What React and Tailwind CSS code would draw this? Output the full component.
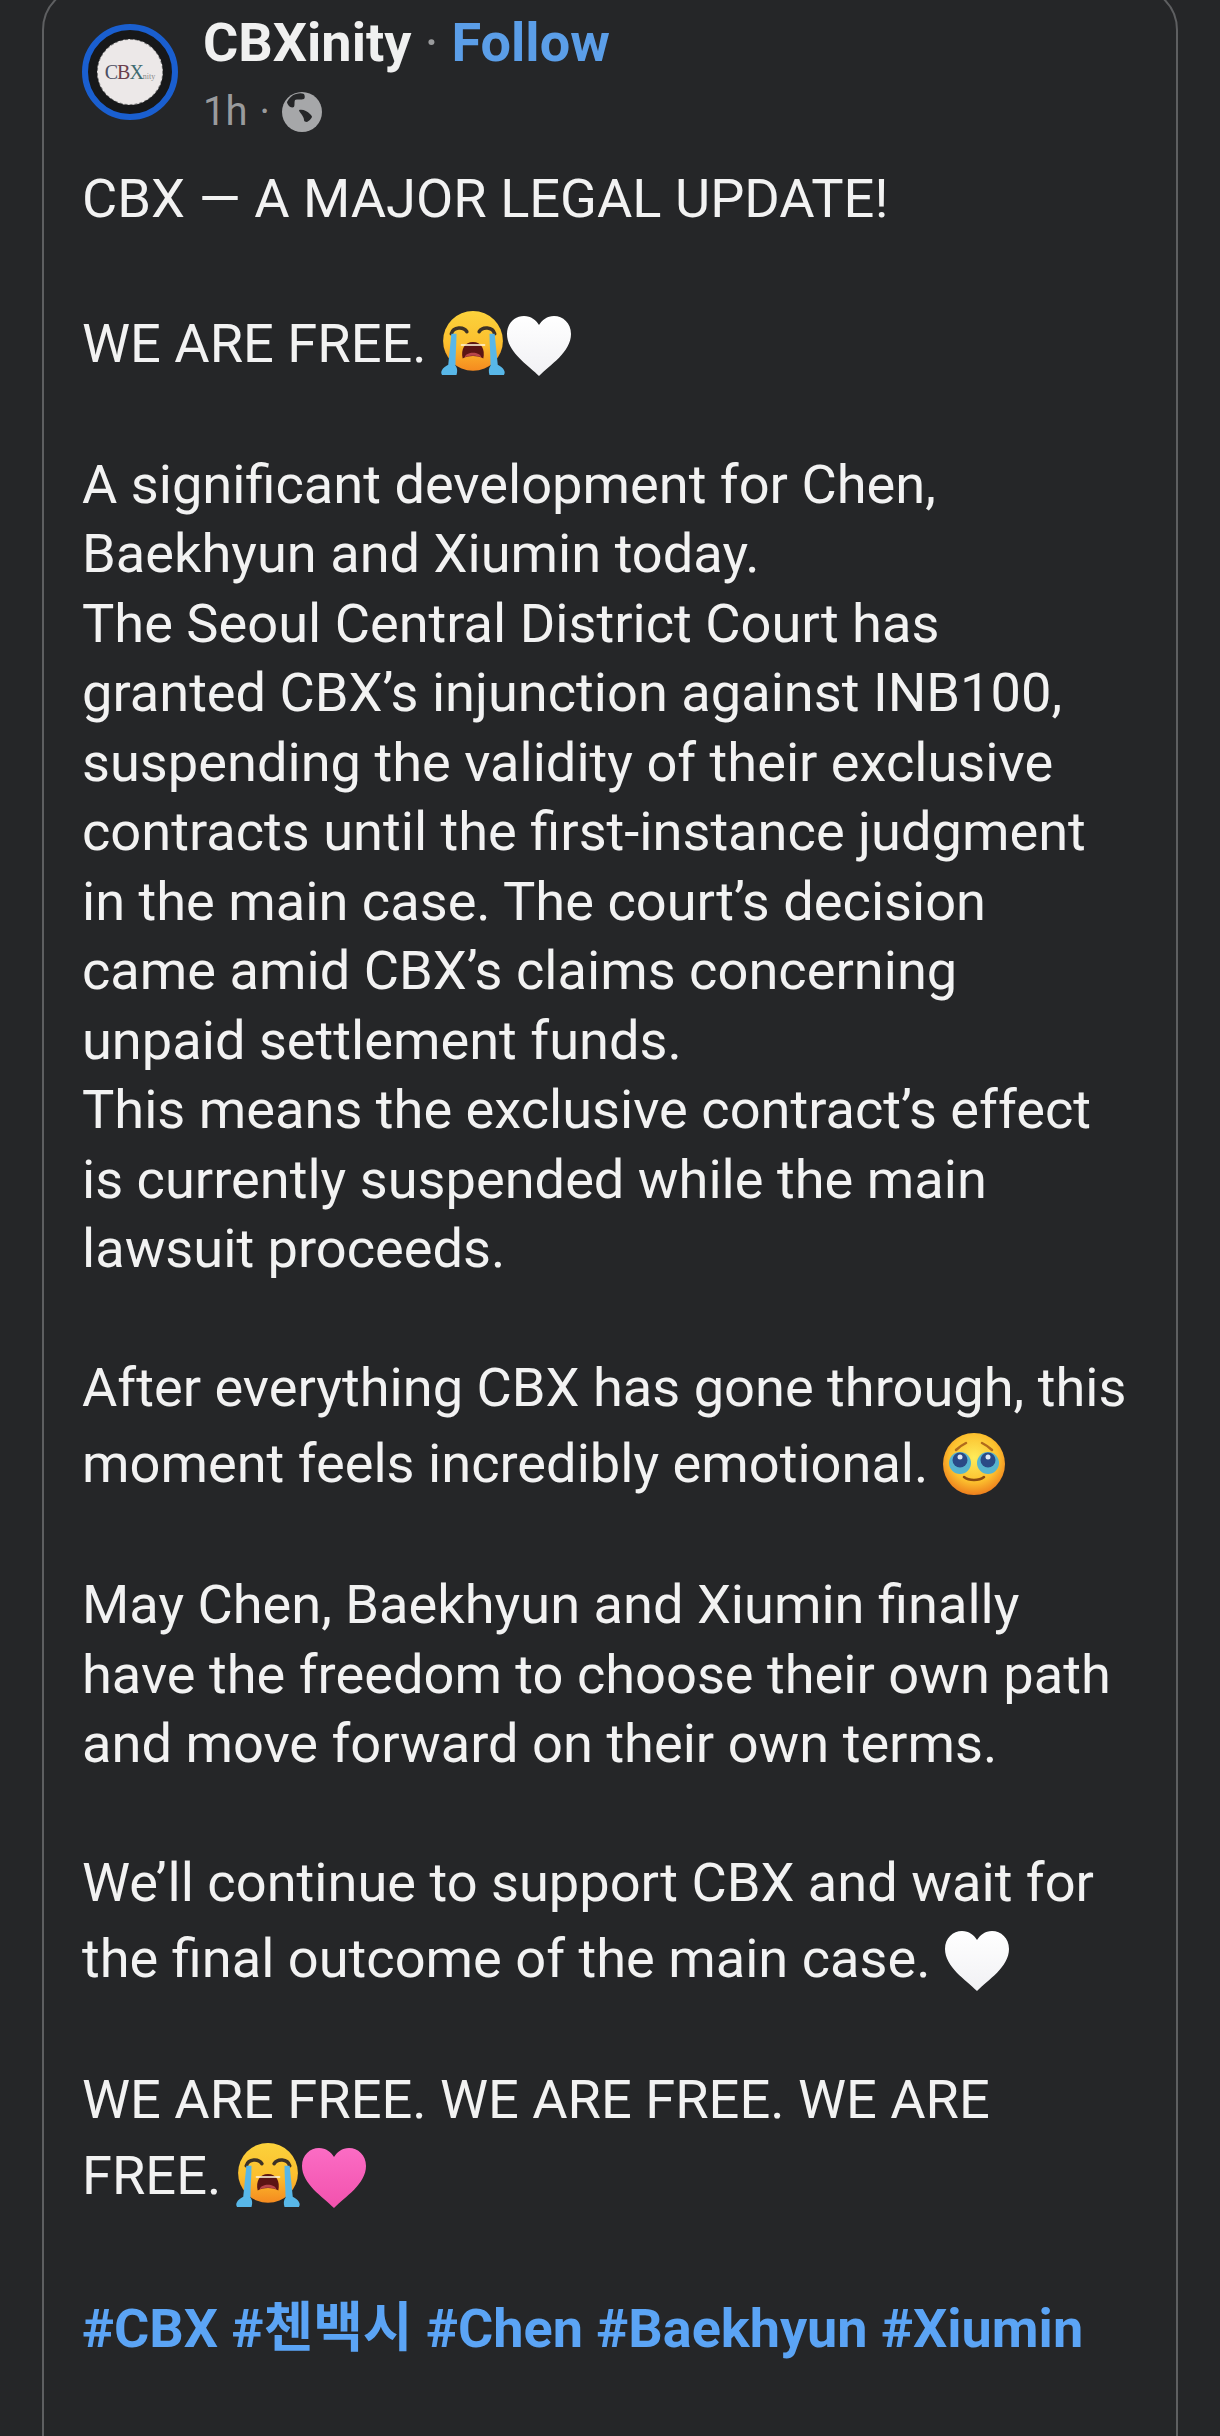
const sans = 'font-["Roboto","Noto_Sans_CJK_KR",sans-serif]';

function CryingFace({ id = 'cry' }) {
  return (
    <svg viewBox="0 0 64 64" className="inline-block h-[66px] w-[66px] align-[-15px]">
      <defs>
        <linearGradient id={`${id}-face`} x1="0" y1="0" x2="0" y2="1">
          <stop offset="0" stopColor="#fbd23c" />
          <stop offset="0.55" stopColor="#fcbf2e" />
          <stop offset="1" stopColor="#f58a1f" />
        </linearGradient>
      </defs>
      <ellipse cx="32" cy="29" rx="29" ry="29" fill={`url(#${id}-face)`} />
      <path d="M11 22c2-7 12-7 15-2M38 20c3-5 13-5 15 2" fill="none" stroke="#3d3226" strokeWidth="3.5" strokeLinecap="round" />
      <path d="M22 46c-2-9 2-16 10-16s12 7 10 16c-6-3-14-3-20 0z" fill="#5c1414" />
      <path d="M24 45c1-6 15-6 16 0-5-2-11-2-16 0z" fill="#b8454a" />
      <path d="M21 33h22" stroke="#fff3d6" strokeWidth="2" strokeLinecap="round" opacity="0.8" />
      <path d="M11 22h5c0 10-1 20-1 31 2 2 2 6 1 9H2c-2-3 0-7 6-10 1-10 2-20 3-30z" fill="#58b7e8" />
      <path d="M53 22h-5c0 10 1 20 1 31-2 2-2 6-1 9h14c2-3 0-7-6-10-1-10-2-20-3-30z" fill="#58b7e8" />
    </svg>
  );
}

function Heart({ color = '#ffffff', tip = '#f1f1f4' }) {
  return (
    <svg viewBox="0 0 66 60" className="inline-block h-[60px] w-[66px] align-[-14px]">
      <defs>
        <linearGradient id={`heart-${color.slice(1)}`} x1="0" y1="0" x2="0" y2="1">
          <stop offset="0" stopColor={color} />
          <stop offset="1" stopColor={tip} />
        </linearGradient>
      </defs>
      <path d="M33 60C22 49 1 36 1 18 1 7 9 0 18 0c7 0 12 4 15 9C36 4 41 0 48 0c9 0 17 7 17 18 0 18-21 31-32 42z" fill={`url(#heart-${color.slice(1)})`} />
    </svg>
  );
}

function PleadingFace() {
  return (
    <svg viewBox="0 0 64 64" className="inline-block h-[64px] w-[64px] align-[-14px]">
      <defs>
        <radialGradient id="plead-face" cx="0.5" cy="0.4" r="0.6">
          <stop offset="0" stopColor="#fdec5a" />
          <stop offset="0.65" stopColor="#fcc02e" />
          <stop offset="1" stopColor="#ee7f1d" />
        </radialGradient>
      </defs>
      <circle cx="32" cy="32" r="31" fill="url(#plead-face)" />
      <path d="M14 18c3-3 6-5 10-7M40 11c4 2 7 4 10 7" fill="none" stroke="#b06a1c" strokeWidth="2.5" strokeLinecap="round" />
      <circle cx="18" cy="31" r="11" fill="#57b4cf" />
      <circle cx="46" cy="31" r="11" fill="#57b4cf" />
      <circle cx="18" cy="28" r="7.5" fill="#2a4a86" />
      <circle cx="46" cy="28" r="7.5" fill="#2a4a86" />
      <circle cx="18" cy="25" r="2.5" fill="#dfe8f5" />
      <circle cx="46" cy="25" r="2.5" fill="#dfe8f5" />
      <path d="M22 45c5 4 15 4 20 0" fill="none" stroke="#8a4a10" strokeWidth="2.5" strokeLinecap="round" />
    </svg>
  );
}

function Globe() {
  return (
    <svg viewBox="0 0 40 40" className="h-[40px] w-[40px]">
      <circle cx="20" cy="20" r="20" fill="#a6a7a9" />
      <path d="M5 10c2-4 5-7 9-8 3-1 6-1 8 0 1 2 1 4 0 5-3 1-7 0-9 1-1 2 0 5-1 7-2 1-4 0-5-1-1-1-2-3-2-4z" fill="#252628" />
      <path d="M17 18c4-1 8 1 11 4 1 1 2 2 2 3-1 2-3 4-5 5-2 0-3-1-3-2 0-2-1-3-2-5-1-2-3-3-3-5z" fill="#252628" />
    </svg>
  );
}

function Avatar() {
  return (
    <div className="flex h-[96px] w-[96px] shrink-0 items-center justify-center rounded-full border-[6px] border-[#1a5fd0] bg-[#17181a]">
      <div className="flex h-[66px] w-[66px] items-center justify-center overflow-hidden rounded-full border border-dashed border-[#8d8d8d] bg-[#ece8e8]">
        <span className='font-["Liberation_Serif",serif] text-[20px] leading-none tracking-[-1px] text-[#4b4f63]'>
          C<span className="text-[#6b3f4c]">B</span><span className="text-[#3f6b70]">X</span><span className="text-[8px] tracking-normal text-[#8a8a8a]">nity</span>
        </span>
      </div>
    </div>
  );
}

function Line({ children, tall = false, low = false }) {
  if (low) return <div className="h-[78px] whitespace-nowrap pt-[5px] leading-[71px]">{children}</div>;
  return <div className={tall ? 'h-[76px] leading-[76px] whitespace-nowrap' : 'h-[69.5px] leading-[69.5px] whitespace-nowrap'}>{children}</div>;
}

export default function App() {
  return (
    <div className={`h-[2436px] w-[1220px] overflow-hidden bg-[#252628] px-[42px] ${sans}`}>
      <div className="-mt-[14px] h-[2500px] rounded-[44px] border-2 border-[#5e5f61] bg-[#252628] pl-[38px] pr-[30px] pt-[36px]">
        <div className="flex items-start gap-[25px]">
          <Avatar />
          <div className="-mt-[12px]">
            <div className="flex items-baseline text-[54px] leading-[62px] font-bold">
              <span className="text-[#f0f0f0]">CBXinity</span>
              <span className="mx-[13px] font-normal text-[#9a9b9d]">·</span>
              <span className="text-[#5b9ee8]">Follow</span>
            </div>
            <div className="mt-[13px] flex items-center gap-[12px] text-[40px] leading-[50px] text-[#9a9b9d]">
              <span>1h</span>
              <span>·</span>
              <Globe />
            </div>
          </div>
        </div>
        <div className="mt-[27px] text-[54.2px] text-[#f2f2f2]">
          <Line>CBX — A MAJOR LEGAL UPDATE!</Line>
          <div className="mt-[72px]">
            <Line tall>WE ARE FREE. <CryingFace id="cry1" /><Heart /></Line>
          </div>
          <div className="mt-[68px]">
            <Line>A significant development for Chen,</Line>
            <Line>Baekhyun and Xiumin today.</Line>
            <Line>The Seoul Central District Court has</Line>
            <Line>granted CBX’s injunction against INB100,</Line>
            <Line>suspending the validity of their exclusive</Line>
            <Line>contracts until the first-instance judgment</Line>
            <Line>in the main case. The court’s decision</Line>
            <Line>came amid CBX’s claims concerning</Line>
            <Line>unpaid settlement funds.</Line>
            <Line>This means the exclusive contract’s effect</Line>
            <Line>is currently suspended while the main</Line>
            <Line>lawsuit proceeds.</Line>
          </div>
          <div className="mt-[69.5px]">
            <Line>After everything CBX has gone through, this</Line>
            <Line low>moment feels incredibly emotional. <PleadingFace /></Line>
          </div>
          <div className="mt-[69.5px]">
            <Line>May Chen, Baekhyun and Xiumin finally</Line>
            <Line>have the freedom to choose their own path</Line>
            <Line>and move forward on their own terms.</Line>
          </div>
          <div className="mt-[69.5px]">
            <Line>We’ll continue to support CBX and wait for</Line>
            <Line low>the final outcome of the main case. <Heart /></Line>
          </div>
          <div className="mt-[69.5px]">
            <Line>WE ARE FREE. WE ARE FREE. WE ARE</Line>
            <Line low>FREE. <CryingFace id="cry2" /><Heart color="#fb6cc4" tip="#f252ad" /></Line>
          </div>
          <div className="mt-[81px] text-[54px] font-bold text-[#5ba4f5]">
            <Line>#CBX #첸백시 #Chen #Baekhyun #Xiumin</Line>
          </div>
        </div>
      </div>
    </div>
  );
}
